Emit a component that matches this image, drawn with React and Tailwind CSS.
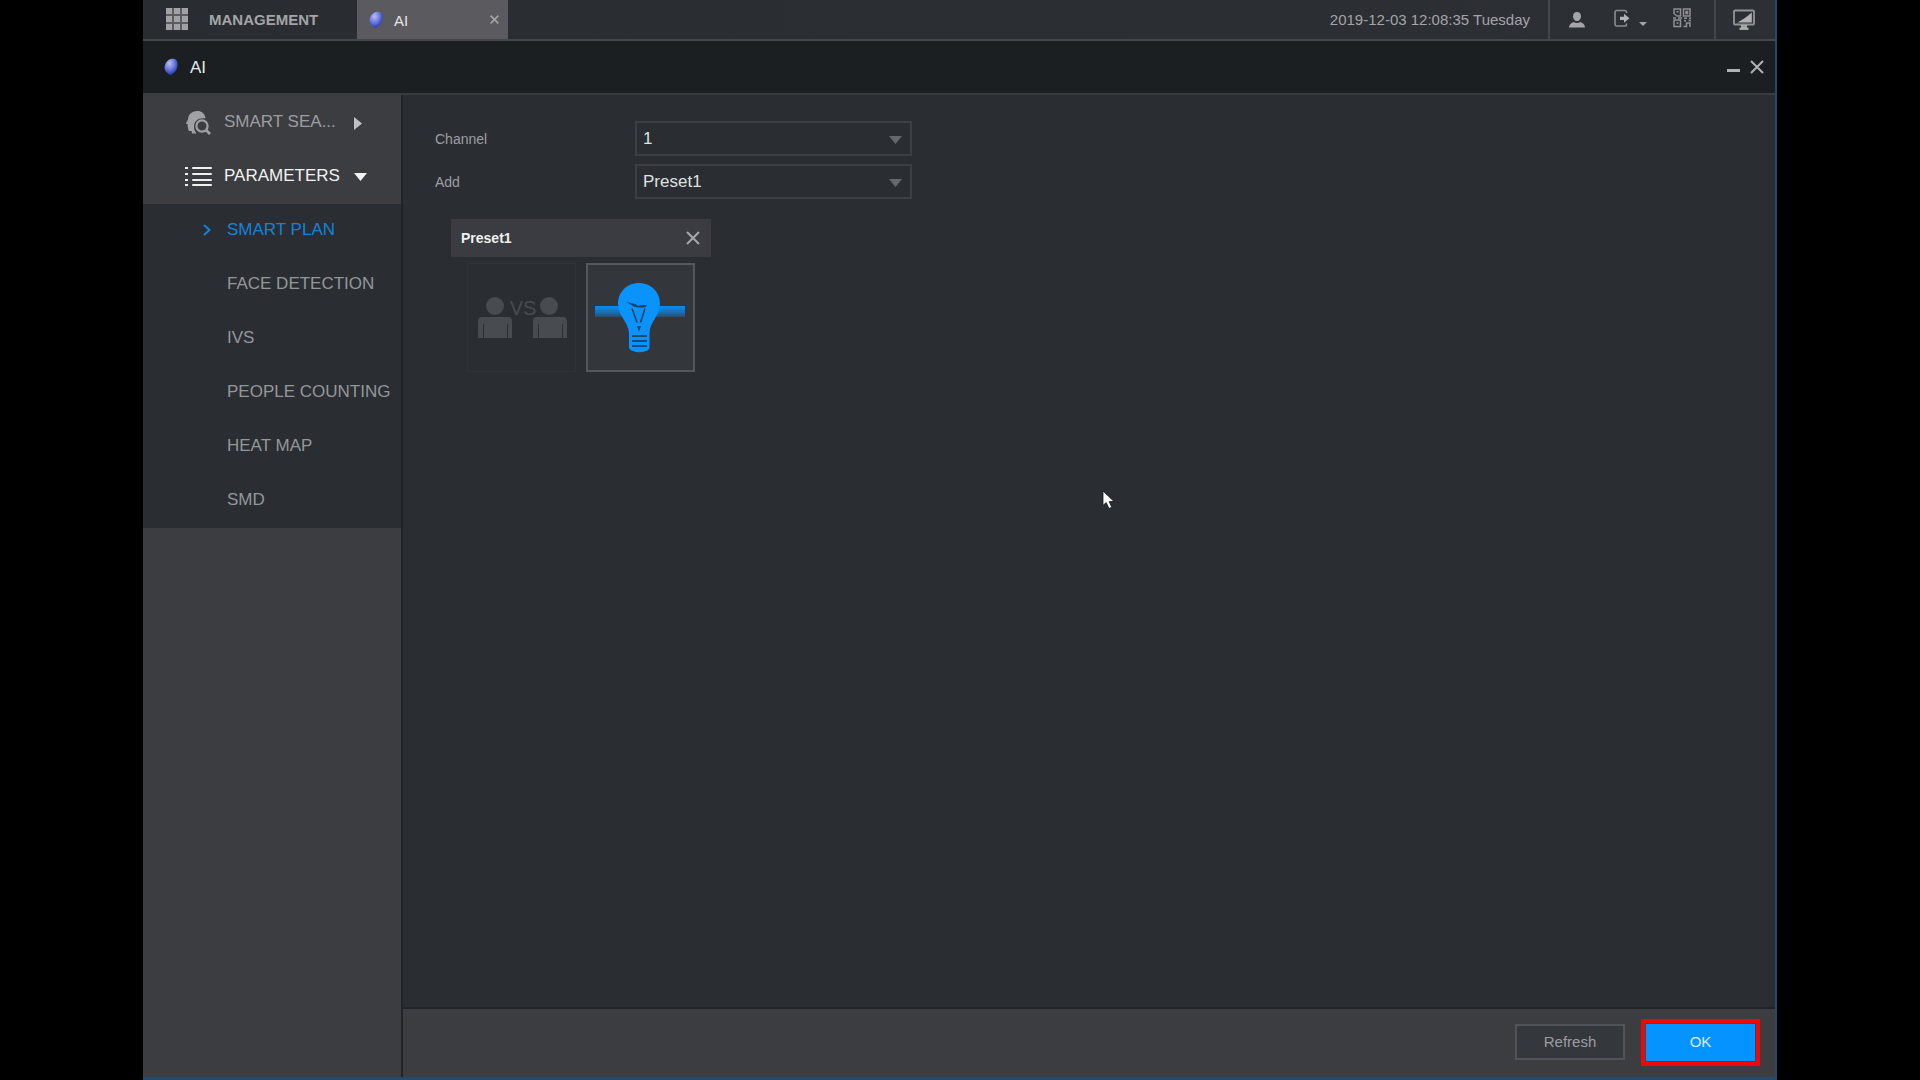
import React, { useState } from "react";

function Gem() {
  return (
    <svg width="14" height="18" viewBox="0 0 14 18" aria-hidden="true" className="shrink-0">
      <defs>
        <radialGradient id="gem" cx="0.38" cy="0.28" r="0.8">
          <stop offset="0" stopColor="#b9bdf3" />
          <stop offset="0.45" stopColor="#7480e2" />
          <stop offset="0.8" stopColor="#3049c0" />
          <stop offset="1" stopColor="#22318a" />
        </radialGradient>
      </defs>
      <path d="M6 1.200C8.600.4 11.800.6 13 3c1 2.500.6 6-.5 8.800C11.500 14 9 15.500 6.800 17 4.500 16.200 1.500 14 .7 11.200 0 7.500 2 3 6 1.200Z" fill="url(#gem)" />
    </svg>
  );
}

function Cross({ size, width = 2, className }) {
  return (
    <svg width={size} height={size} viewBox="0 0 14 14" aria-hidden="true" className={className}>
      <path d="M1 1l12 12M13 1L1 13" stroke="currentColor" strokeWidth={width} fill="none" />
    </svg>
  );
}

function GridIcon() {
  return (
    <svg width="22" height="22" viewBox="0 0 22 22" aria-hidden="true">
      <rect width="22" height="22" fill="#5a5c60" />
      {[0, 8, 16].map((y) => [0, 8, 16].map((x) => <rect key={`${x}-${y}`} x={x} y={y} width="6" height="6" fill="#a0a2a5" />))}
    </svg>
  );
}

function UserIcon() {
  return (
    <svg width="16" height="16" viewBox="0 0 16 16" fill="#a3a5a8" aria-hidden="true">
      <path d="M8 0c2.600 0 4 1.700 4 4.200C12 6.800 10.200 9 8 9S4 6.800 4 4.200C4 1.700 5.400 0 8 0Z" />
      <path d="M0 15.500c0-2.600 1.700-4.500 4.500-5.500C6.400 11.400 9.600 11.400 11.500 10c2.800 1 4.500 2.900 4.500 5.500Z" />
    </svg>
  );
}

function LogoutIcon() {
  return (
    <svg width="34" height="20" viewBox="0 0 34 20" aria-hidden="true">
      <path d="M12.500 4V3.200A1.700 1.700 0 0 0 10.800 1.500H2.700A1.700 1.700 0 0 0 1 3.200v12.100A1.700 1.700 0 0 0 2.700 17h8.100a1.700 1.700 0 0 0 1.700-1.700v-.8" fill="none" stroke="#8b8d90" strokeWidth="1.600" />
      <path d="M6 7.700h4V4.800l5.500 4.500-5.500 4.500v-2.900H6Z" fill="#b0b2b4" />
      <path d="M25 13h8l-4 4Z" fill="#a3a5a8" />
    </svg>
  );
}

function CodeIcon() {
  return (
    <svg width="18" height="20" viewBox="0 0 18 20" fill="none" stroke="#8f9194" strokeWidth="1.500" aria-hidden="true">
      <path d="M1 1h6.500v7H4L1 5.500ZM10.500 1H17v7h-6.500ZM1 12h6.500v6.500H1Z" />
      <path d="M3.500 3.800h2M13 3.500h1.500v2H13ZM3.500 15h2M0 10h3M5 10h4M11 10.200h3M16 10.200h2M10.500 18.500h3v-3.500h3.500v4M11 12.800h2M15.500 12.500H18" />
    </svg>
  );
}

function MonitorIcon() {
  return (
    <svg width="22" height="22" viewBox="0 0 22 22" aria-hidden="true">
      <rect x="1" y="1.500" width="20" height="14" rx="1" fill="none" stroke="#929497" strokeWidth="1.800" />
      <path d="M18.800 3.500v10H4.500C9 11 14 8 18.800 3.500Z" fill="#b0b2b4" />
      <path d="M8 16h6v2.500h1.500V21h-9v-2.500H8Z" fill="#a6a8aa" />
    </svg>
  );
}

function HeadSearchIcon() {
  return (
    <svg width="26" height="26" viewBox="0 0 26 26" aria-hidden="true">
      <path d="M12 1c4.500-.2 8 2.500 8.500 7.500C14 7.200 9 11 9 16.500c0 2.700 1 5 2.500 7L7 23.500 6.500 21C4 21.200 3.200 20.500 3.200 18.500L2.500 16 3 14.500.8 13.500 3 9.500C3 4.500 7 1.200 12 1Z" fill="#a0a1a4" />
      <circle cx="17" cy="16" r="5.600" fill="none" stroke="#a0a1a4" strokeWidth="2.200" />
      <path d="M21 20l4 4" stroke="#a0a1a4" strokeWidth="2.600" />
    </svg>
  );
}

function ListIcon() {
  return (
    <svg width="27" height="20" viewBox="0 0 27 20" fill="#f0f0f0" aria-hidden="true">
      {[0, 6, 12, 17].map((y) => (
        <g key={y}>
          <rect x="0" y={y} width="3" height="2" />
          <rect x="7" y={y} width="20" height="2" rx="1" />
        </g>
      ))}
    </svg>
  );
}

function FaceCompareIcon() {
  return (
    <svg width="90" height="42" viewBox="0 0 90 42" fill="#484b4f" aria-hidden="true">
      <circle cx="18" cy="9" r="9" />
      <path d="M1 41V24q0-4 4-4h26q4 0 4 4v17h-4V27h-1v14H7V27H6v14Z" />
      <circle cx="72" cy="9" r="9" />
      <path d="M56 41V24q0-4 4-4h26q4 0 4 4v17h-4V27h-1v14H62V27h-1v14Z" />
      <text x="46" y="18" textAnchor="middle" fontSize="20" fontFamily="Liberation Sans, Arial, sans-serif">VS</text>
    </svg>
  );
}

function BulbIcon() {
  return (
    <svg width="92" height="70" viewBox="0 0 92 70" aria-hidden="true">
      <defs>
        <linearGradient id="beam" x1="0" y1="0" x2="0" y2="1">
          <stop offset="0" stopColor="#0a8df0" />
          <stop offset="0.5" stopColor="#1b72b8" />
          <stop offset="1" stopColor="#2a4d6c" />
        </linearGradient>
      </defs>
      <rect x="0" y="23" width="90" height="11" fill="url(#beam)" />
      <path d="M44 0C56 0 65 9 65 20.500 65 33 55 38 54.500 50V64q0 3-3.500 4-7 2.500-13 0-4-1-4-4V50C33 38 23 33 23 20.500 23 9 32 0 44 0Z" fill="#0a93fb" />
      <path d="M32 19q4 1 6 1.500 3 .3 5 2.500 4-1.500 9-1-1 3-7 2.500-7 0-13-5.500Z" fill="#173f68" />
      <path d="M37 25.500l5 14M50 25.500L45.500 39.500" fill="none" stroke="#173f68" strokeWidth="1.600" />
      <path d="M42 43h4l-2 5.500Z" fill="#173f68" />
      <path d="M37 53h15M37 58h15M37 63h15" stroke="#12497c" strokeWidth="2" />
    </svg>
  );
}

function Caret({ className }) {
  return (
    <svg width="13" height="8" viewBox="0 0 13 8" fill="currentColor" aria-hidden="true" className={className}>
      <path d="M0 0h13L6.500 8Z" />
    </svg>
  );
}

function Field({ id, label, options }) {
  return (
    <div className="flex items-center">
      <label htmlFor={id} className="w-[200px] text-sm text-[#9c9ea1]">{label}</label>
      <div className="relative w-[277px]">
        <select id={id} className="block h-[35px] w-full appearance-none border-2 border-[#3c3f43] bg-[#2a2e32] pr-8 pl-[6px] text-[17px] leading-5 text-[#dfe1e2]">
          {options.map((o) => <option key={o}>{o}</option>)}
        </select>
        <Caret className="pointer-events-none absolute top-[15px] right-[10px] text-[#66696c]" />
      </div>
    </div>
  );
}

const pages = ["SMART PLAN", "FACE DETECTION", "IVS", "PEOPLE COUNTING", "HEAT MAP", "SMD"];

function Sidebar() {
  const [page, setPage] = useState("SMART PLAN");
  return (
    <nav className="w-[260px] shrink-0 border-r-2 border-[#202429] bg-[#3b3d41] pt-px text-[17px] leading-5">
      <button type="button" className="flex h-[54px] w-full items-center pl-[42px] text-[#9c9da0]">
        <HeadSearchIcon />
        <span className="ml-[13px] w-[118px] pb-[3px] text-left">SMART SEA...</span>
        <svg width="8" height="13" viewBox="0 0 8 13" fill="#c0c1c3" aria-hidden="true" className="ml-[12px]"><path d="M0 0l8 6.500L0 13Z" /></svg>
      </button>
      <button type="button" aria-expanded="true" className="flex h-[54px] w-full items-center pl-[42px] text-[#f2f2f2]">
        <ListIcon />
        <span className="ml-[12px] w-[118px] pb-[3px] text-left">PARAMETERS</span>
        <Caret className="ml-[12px]" />
      </button>
      <ul className="bg-[#2a2e32]">
        {pages.map((p) => (
          <li key={p}>
            <a href="#" onClick={(e) => { e.preventDefault(); setPage(p); }} className={p === page ? "flex h-[54px] items-center pb-[2px] pl-[60px] whitespace-nowrap text-[#1482da]" : "flex h-[54px] items-center pb-[2px] pl-[60px] whitespace-nowrap text-[#94979a]"}>
              <span className="w-[24px]">
                {p === page && <svg width="8" height="12" viewBox="0 0 8 12" fill="none" stroke="currentColor" strokeWidth="2" aria-hidden="true"><path d="M1 1l5.500 5L1 11" /></svg>}
              </span>
              {p}
            </a>
          </li>
        ))}
      </ul>
    </nav>
  );
}

export default function App() {
  return (
    <div className="min-h-screen bg-black font-['Liberation_Sans',Arial,sans-serif]">
      <div className="relative mx-[143px] flex min-h-screen flex-col border-r-2 border-b-3 border-[#26496a] bg-[#2a2e32]">
        <header className="flex h-[41px] items-stretch border-b-2 border-[#45474b] bg-linear-to-r from-[#292c31] to-[#2c2f34] text-[15px] text-[#a3a5a8]">
          <button type="button" className="flex w-[214px] items-center gap-[21px] pb-px pl-[23px] font-bold">
            <GridIcon />
            <span className="pt-[3px]">MANAGEMENT</span>
          </button>
          <div className="flex w-[151px] items-center bg-[#5b5a5f] pr-[9px] pl-[12px] text-[#e4e4e6]">
            <Gem />
            <span className="ml-[11px] flex-1 pt-[3px]">AI</span>
            <button type="button" aria-label="Close tab" className="text-[#a4a4a7]"><Cross size={9} width={2.5} /></button>
          </div>
          <time className="ml-auto flex items-center pt-px pr-[18px]">2019-12-03 12:08:35 Tuesday</time>
          <div className="flex w-[166px] items-center border-l-2 border-[#45474b] pl-[19px]">
            <button type="button" aria-label="User"><UserIcon /></button>
            <button type="button" aria-label="Log out" className="ml-[29px] pb-px"><LogoutIcon /></button>
            <button type="button" aria-label="QR code" className="ml-[25px] pb-1"><CodeIcon /></button>
          </div>
          <div className="flex w-[61px] items-center border-l-2 border-[#45474b] pl-[17px]">
            <button type="button" aria-label="Display"><MonitorIcon /></button>
          </div>
        </header>

        <div className="flex h-[54px] items-center border-b-2 border-[#383c3f] bg-[#1b1f22] pr-[11px] pl-[21px] text-[#b0b2b4]">
          <Gem />
          <h1 className="ml-[12px] flex-1 pt-px text-[17px] leading-5 text-[#e6e7e8]">AI</h1>
          <button type="button" aria-label="Minimize" className="mr-[10px] pt-[6px]">
            <svg width="13" height="3" viewBox="0 0 13 3" aria-hidden="true"><rect width="13" height="3" fill="currentColor" /></svg>
          </button>
          <button type="button" aria-label="Close"><Cross size={14} /></button>
        </div>

        <div className="flex flex-1">
          <Sidebar />
          <div className="flex min-w-0 flex-1 flex-col">
            <main className="flex-1 pt-[26px] pl-[32px]">
              <div className="flex flex-col gap-2">
                <Field id="channel" label="Channel" options={["1"]} />
                <Field id="add" label="Add" options={["Preset1"]} />
              </div>
              <section className="mt-[20px] ml-[16px] w-[260px]">
                <div className="flex h-[38px] items-center justify-between bg-[#3a3c41] pr-[11px] pl-[10px] text-[#a6a8aa]">
                  <h2 className="text-sm font-bold text-[#f0f0f0]">Preset1</h2>
                  <button type="button" aria-label="Remove Preset1"><Cross size={14} /></button>
                </div>
                <div className="mt-[6px] flex gap-[10px] pl-[16px]">
                  <button type="button" aria-label="Face comparison" className="flex size-[109px] items-center justify-center border border-[#2f3337]"><FaceCompareIcon /></button>
                  <button type="button" aria-label="IVS" className="flex size-[109px] items-center justify-center border-2 border-[#54575b] bg-[#33363b]"><BulbIcon /></button>
                </div>
              </section>
            </main>
            <footer className="flex h-[70px] items-center justify-end gap-[16px] border-t-2 border-[#202429] bg-[#3b3d41] pr-[15px] pb-[2px] text-[15px]">
              <button type="button" className="h-[36px] w-[110px] border-2 border-[#505357] bg-[#34373b] text-[#9c9ea1]">Refresh</button>
              <div className="border-4 border-[#f00808] bg-[#2b4a70] p-px">
                <button type="button" className="block h-[37px] w-[109px] bg-[#0593ff] text-[#d9eeff]">OK</button>
              </div>
            </footer>
          </div>
        </div>

        <svg width="14" height="20" viewBox="0 0 14 20" aria-hidden="true" className="pointer-events-none absolute top-[490px] left-[959px]">
          <path d="M1 1v14.500l3.200-3L7 18.500l2.700-1.200L7.200 11.500H12Z" fill="#fff" stroke="#15181b" strokeWidth="0.800" />
        </svg>
      </div>
    </div>
  );
}
